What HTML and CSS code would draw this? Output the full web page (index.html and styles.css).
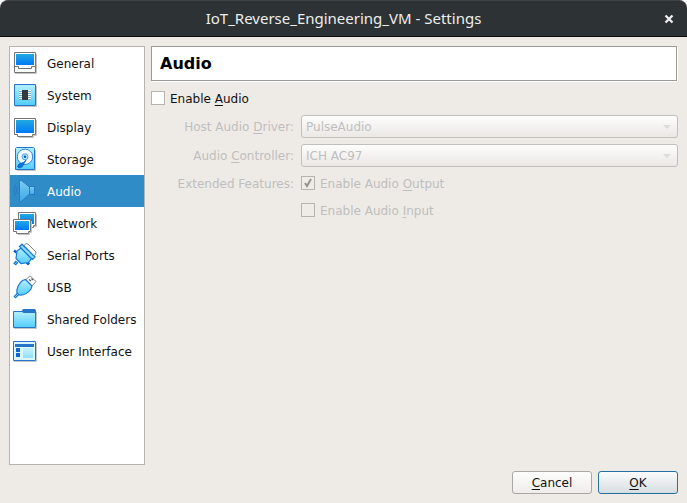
FILE: index.html
```html
<!DOCTYPE html>
<html lang="en">
<head>
<meta charset="utf-8">
<title>IoT_Reverse_Engineering_VM - Settings</title>
<link rel="stylesheet" href="styles.css">
</head>
<body>
<svg class="defs" aria-hidden="true">
  <defs>
    <linearGradient id="screen" x1="0" y1="0" x2="0" y2="1"><stop offset="0" stop-color="#22a9e0"/><stop offset="1" stop-color="#0078f8"/></linearGradient>
    <linearGradient id="ice" x1="0" y1="0" x2="0" y2="1"><stop offset="0" stop-color="#b4f0fe"/><stop offset="1" stop-color="#52cdfc"/></linearGradient>
    <linearGradient id="horn" x1="0" y1="0" x2="0" y2="1"><stop offset="0" stop-color="#78cdf2"/><stop offset="1" stop-color="#40a8e6"/></linearGradient>
  </defs>
</svg>
<div class="window">
  <header class="titlebar">
    <h1 class="title">IoT_Reverse_Engineering_VM - Settings</h1>
    <button class="close" type="button" aria-label="Close">
      <svg width="10" height="10" viewBox="0 0 10 10"><path d="M1.5 1.5 8.5 8.5M8.5 1.5 1.5 8.5" stroke="#eeeeec" stroke-width="2.3"/></svg>
    </button>
  </header>
  <main class="content">
    <nav class="sidebar">
      <a class="item" href="#general">
        <svg class="icon" viewBox="0 0 24 24"><path d="M2 22.5H23.5V3" fill="none" stroke="#c4c4c4"/><path d="M1.5 1.5H22.5V21.5H1.5Z" fill="#fff" stroke="#747474"/><path d="M3 3H21V14H3Z" fill="url(#screen)"/><path d="M1.5 15.5H5.5V17.5H18.5V15.5H22.5" fill="none" stroke="#747474"/></svg>
        <span>General</span></a>
      <a class="item" href="#system">
        <svg class="icon" viewBox="0 0 24 24"><path d="M2 23.5H23.5V3" fill="none" stroke="#c4c4c4"/><path d="M1.5 1.5H22.5V22.5H1.5Z" fill="url(#ice)" stroke="#2674cc"/><path d="M6 7.500H18M6 9.500H18M6 11.500H18M6 13.500H18M6 15.500H18" stroke="#fff"/><path d="M6 8.500H18M6 10.500H18M6 12.500H18M6 14.500H18M6 16.500H18" stroke="#6daac8"/><path d="M9 7H15V17H9Z" fill="#35393f"/></svg>
        <span>System</span></a>
      <a class="item" href="#display">
        <svg class="icon" viewBox="0 0 24 24"><path d="M6 22.500H20.500V20.500H23.500V5" fill="none" stroke="#c4c4c4"/><path d="M1.500 3.500H22.500V19.500H19.500V21.500H4.500V19.500H1.500Z" fill="#fff" stroke="#747474"/><path d="M3 5H21V18H3Z" fill="url(#screen)"/></svg>
        <span>Display</span></a>
      <a class="item" href="#storage">
        <svg class="icon" viewBox="0 0 24 24"><path d="M4 23.500H22.500V3" fill="none" stroke="#c4c4c4"/><path d="M3.500 .5H20.500L21.500 1.500V22.500H2.500V1.500Z" fill="url(#ice)" stroke="#2674cc"/><circle cx="12" cy="9.800" r="7.700" fill="#f3fbff" stroke="#2b86de"/><circle cx="12" cy="9.800" r="3" fill="#bdeaff" stroke="#4ba5e8"/><circle cx="12" cy="9.800" r="1.300" fill="#0758c8"/><path d="M13 13 11.500 15 6 17 4.500 19.500 6 21 9 20Z" fill="#0877dd" stroke="#0b61bd" stroke-width=".8"/></svg>
        <span>Storage</span></a>
      <a class="item selected" href="#audio" aria-current="page">
        <svg class="icon" viewBox="0 0 24 24"><path d="M6.500 1.500H8.500L16.500 8V15L8.500 22.500H6.500Z" fill="url(#horn)" stroke="#2878c4"/><path d="M16.500 7.500H21.500V15.500H16.500Z" fill="url(#horn)" stroke="#2878c4"/><path d="M4.500 7.500Q2.500 11.500 4.500 15.500M2.500 6Q-.5 11.500 2.500 17" fill="none" stroke="#2878c4"/></svg>
        <span>Audio</span></a>
      <a class="item" href="#network">
        <svg class="icon" viewBox="0 0 24 24"><path d="M23.500 3V15.500H20" fill="none" stroke="#c4c4c4"/><path d="M5.500 1.500H22.500V14.500H20.500V16.500H8V14.500H5.500Z" fill="#fff" stroke="#747474"/><path d="M7 3H21V13H7Z" fill="url(#screen)"/><path d="M5 23.500H16.500V21.500H18.500V10" fill="none" stroke="#c4c4c4"/><path d="M.5 8.500H17.500V20.500H15.500V22.500H3.500V20.500H.5Z" fill="#fff" stroke="#747474"/><path d="M2 10H16V19H2Z" fill="url(#screen)"/></svg>
        <span>Network</span></a>
      <a class="item" href="#serial">
        <svg class="icon" viewBox="0 0 24 24"><path d="M11 2.500 13 .7 15 1 23 9 22.500 11.500 20.500 13Z" fill="#fff" stroke="#858585"/><path d="M3 7.500 1.500 9.500M16 19.500 14 21.500" stroke="#075fc5" stroke-width="3"/><path d="M4 18.500 1.500 21.500" stroke="#1679d4" stroke-width="3.500"/><path d="M8 5 18.500 15.500 15.500 19.500 8 20.500 3 15.500 4 8Z" fill="url(#ice)" stroke="#1679d4" stroke-width="1.200"/><path d="M6.500 3.500 9 1.200 22 14 19.500 16.500Z" fill="#8fdffb" stroke="#1679d4" stroke-width="1.200"/><path d="M4 18.500 2 21" stroke="#52cdfc"/></svg>
        <span>Serial Ports</span></a>
      <a class="item" href="#usb">
        <svg class="icon" viewBox="0 0 24 24"><path d="M12 5.500 17 .8 23 6.500 18 12Z" fill="#fff" stroke="#858585"/><path d="M16 4.500 18 6M18.500 3.500 20 5" stroke="#555" stroke-width="1.300"/><path d="M9.500 5.500 12.500 4.500 19 11 18 14C15 18 10 20.500 6 20L4 18C3 14 6 8 9.500 5.500Z" fill="url(#ice)" stroke="#2674cc" stroke-width="1.200"/><path d="M5 19 1.500 22.500" stroke="#1679d4" stroke-width="3"/><path d="M5 19 2 22" stroke="#65cff8"/></svg>
        <span>USB</span></a>
      <a class="item" href="#folders">
        <svg class="icon" viewBox="0 0 24 24"><path d="M1 21.500H23.500V5" fill="none" stroke="#c4c4c4"/><path d="M8 5 10 2H22L23 3.500V7H8Z" fill="#2674cc"/><path d="M.5 4.500H9L11 5.500H22.500V20.500H.5Z" fill="url(#ice)" stroke="#2674cc"/></svg>
        <span>Shared Folders</span></a>
      <a class="item" href="#interface">
        <svg class="icon" viewBox="0 0 24 24"><path d="M1 22.500H23.500V4" fill="none" stroke="#c4c4c4"/><path d="M.5 2.500H22.500V21.500H.5Z" fill="#d9f6ff" stroke="#2674cc"/><path d="M2 5H21V8H2Z" fill="#2674cc"/><path d="M3 9H7V13H3ZM3 14H7V18H3Z" fill="#1269cc"/><path d="M10 9H20V19H10Z" fill="url(#ice)" opacity=".55"/></svg>
        <span>User Interface</span></a>
    </nav>
    <section class="page">
      <h2 class="heading">Audio</h2>
      <form class="form">
        <label class="check"><input type="checkbox"><span>Enable <u>A</u>udio</span></label>
        <div class="grid">
          <label class="caption" for="driver">Host Audio <u>D</u>river:</label>
          <span class="combo"><select id="driver" disabled><option>PulseAudio</option></select></span>
          <label class="caption" for="controller">Audio <u>C</u>ontroller:</label>
          <span class="combo"><select id="controller" disabled><option>ICH AC97</option></select></span>
          <span class="caption features">Extended Features:</span>
          <div class="checks">
            <label class="check off"><input type="checkbox" checked disabled><span>Enable Audio <u>O</u>utput</span></label>
            <label class="check off"><input type="checkbox" disabled><span>Enable Audio <u>I</u>nput</span></label>
          </div>
        </div>
      </form>
    </section>
  </main>
  <footer class="actions">
    <button class="button" type="button"><u>C</u>ancel</button>
    <button class="button primary" type="button"><u>O</u>K</button>
  </footer>
</div>
</body>
</html>
```
FILE: styles.css
```css
* { box-sizing: border-box; }

body {
  margin: 0;
  background: #fff;
  color: #111;
  font: 12px/16px "DejaVu Sans", sans-serif;
}

.defs { position: absolute; width: 0; height: 0; }

u { text-decoration: underline; text-underline-offset: 2px; text-decoration-thickness: 1px; text-decoration-skip-ink: none; }

.window {
  display: flex;
  flex-direction: column;
  min-height: 100vh;
  background: #eeebe6;
  border-radius: 8px 8px 0 0;
}

.titlebar {
  display: grid;
  grid-template-columns: 36px 1fr 36px;
  align-items: center;
  height: 37px;
  background: #2d3234;
  border-top: 1px solid #3d4345;
  border-bottom: 1px solid #0b0d0d;
  border-radius: 8px 8px 0 0;
}

.title {
  grid-column: 2;
  margin: 0;
  padding-bottom: 2px;
  color: #eeeeec;
  font: 400 15px/20px "Noto Sans", sans-serif;
  text-align: center;
}

.close {
  display: flex;
  justify-content: center;
  padding: 0;
  border: 0;
  background: none;
}

.content {
  display: flex;
  flex: 1;
  gap: 6px;
  padding: 9px 9px 6px;
}

.sidebar {
  flex: 0 0 136px;
  background: #fff;
  border: 1px solid #b7b4b0;
}

.item {
  display: flex;
  align-items: center;
  gap: 10px;
  height: 32px;
  padding-left: 3px;
  color: #111;
  text-decoration: none;
  white-space: nowrap;
}

.item span { padding-top: 2px; }

.item.selected { background: #308cc6; color: #fff; }

.icon { flex: none; width: 24px; height: 24px; }

.page { flex: 1; min-width: 0; }

.heading {
  margin: 0 1px 0 0;
  padding: 7px 8px 6px;
  background: #fff;
  border: 1px solid #9c9a97;
  box-shadow: 1px 1px 0 #fff;
  color: #000;
  font: bold 16px/20px "DejaVu Sans", sans-serif;
}

.form { padding-top: 8px; }

.check { display: flex; align-items: center; gap: 5px; }

.check input {
  appearance: none;
  width: 14px;
  height: 14px;
  margin: 0;
  background: #fff;
  border: 1px solid #b7b4b0;
}

.check span { padding-top: 2px; }

.check.off { color: #bebebe; }
.check.off input { background: #efece8; }

.check input:checked {
  background: #efece8 url("data:image/svg+xml,%3Csvg xmlns='http://www.w3.org/2000/svg' viewBox='0 0 12 12'%3E%3Cpath d='M3 6 5 9 9 2' fill='none' stroke='%23949290' stroke-width='2'/%3E%3C/svg%3E") center / 12px 12px no-repeat;
}

.grid {
  display: grid;
  grid-template-columns: 143px 1fr;
  gap: 6px 7px;
  padding-top: 8px;
}

.caption { align-self: center; padding-top: 1px; color: #bebebe; text-align: right; }
.features { align-self: start; padding-top: 3px; }

.combo { position: relative; display: block; }

.combo::after {
  content: "";
  position: absolute;
  top: 10px;
  right: 7px;
  border: 4px solid transparent;
  border-top-color: #dddbd8;
  border-bottom: 0;
}

select {
  appearance: none;
  display: block;
  width: 100%;
  height: 23px;
  padding: 1px 20px 0 4px;
  border: 1px solid #c1bfbc;
  border-radius: 3px;
  background: linear-gradient(#fdfdfd, #ebe8e5);
  color: #bebebe;
  font: inherit;
  opacity: 1;
}

.checks { display: flex; flex-direction: column; gap: 9px; padding-top: 1px; }

.actions {
  display: flex;
  justify-content: flex-end;
  gap: 6px;
  padding: 0 9px 9px;
}

.button {
  width: 80px;
  height: 23px;
  padding: 0;
  border: 1px solid #aaa8a5;
  border-radius: 3px;
  background: linear-gradient(#fdfdfd, #efedea);
  color: #111;
  font: inherit;
}

.button.primary {
  border-color: #23719f;
  background: linear-gradient(#fafbfb, #d7dee1);
}
```
